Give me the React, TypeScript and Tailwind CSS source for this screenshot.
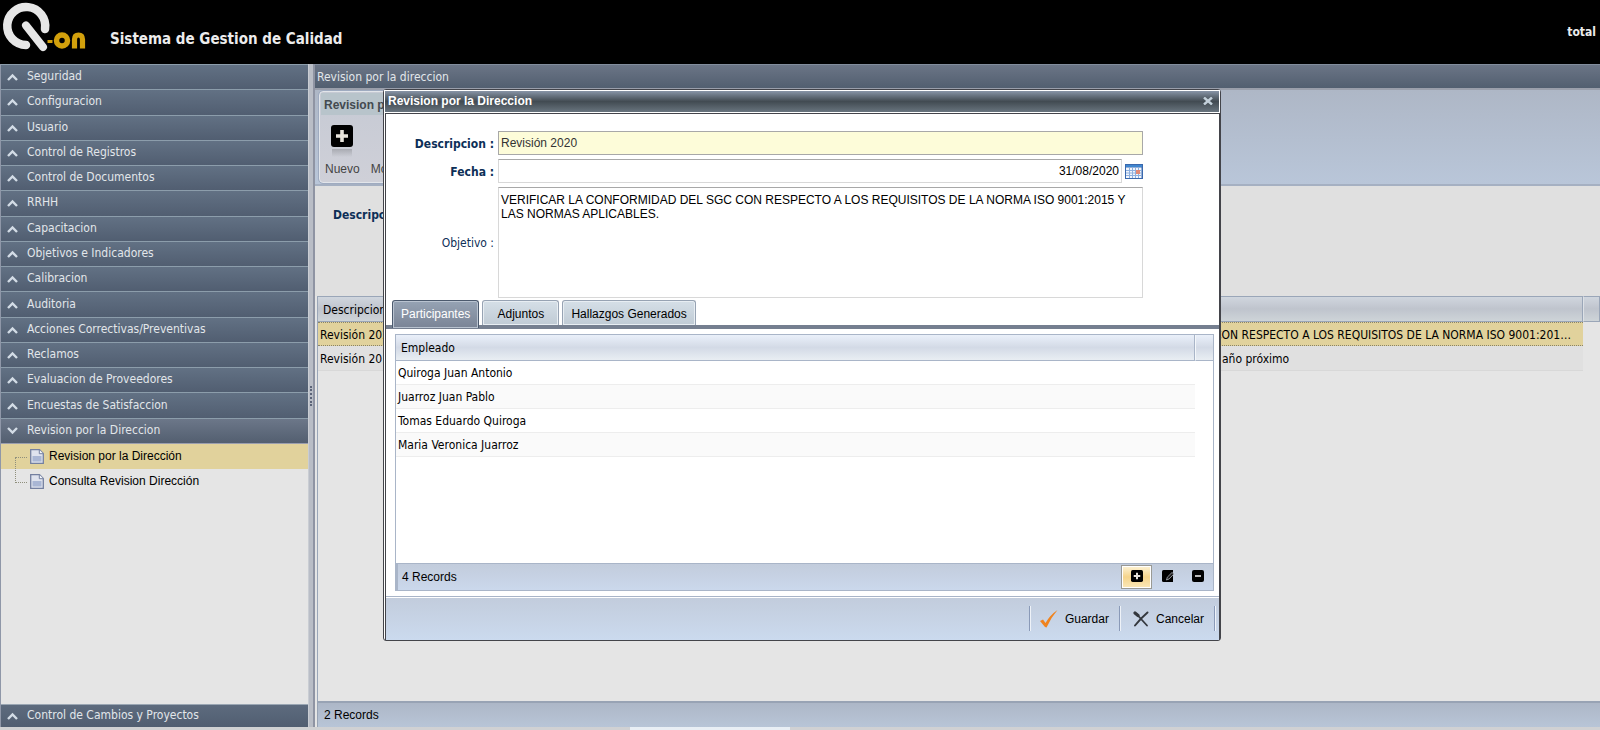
import React, { useState } from 'react';
import clsx from 'clsx';

const MENU = [
  'Seguridad',
  'Configuracion',
  'Usuario',
  'Control de Registros',
  'Control de Documentos',
  'RRHH',
  'Capacitacion',
  'Objetivos e Indicadores',
  'Calibracion',
  'Auditoria',
  'Acciones Correctivas/Preventivas',
  'Reclamos',
  'Evaluacion de Proveedores',
  'Encuestas de Satisfaccion',
  'Revision por la Direccion',
];

const EMPLEADOS = [
  'Quiroga Juan Antonio',
  'Juarroz Juan Pablo',
  'Tomas Eduardo Quiroga',
  'Maria Veronica Juarroz',
];

const REVISIONES = [
  {
    descripcion: 'Revisión 2020',
    objetivo:
      'VERIFICAR LA CONFORMIDAD DEL SGC CON RESPECTO A LOS REQUISITOS DE LA NORMA ISO 9001:2015 Y LAS NORMAS APLICABLES.',
  },
  {
    descripcion: 'Revisión 2019',
    objetivo: 'Planificar los objetivos de ventas para el año próximo',
  },
];

const TABS = ['Participantes', 'Adjuntos', 'Hallazgos Generados'];

const Logo = () => (
  <svg className="h-16 w-[90px]" viewBox="0 0 90 64" fill="none" aria-label="Q-on">
    <path d="M26 45 A19 19 0 1 1 45 29" stroke="#e6e6e6" strokeWidth="8.500" strokeLinecap="round" />
    <path d="M26 25.500 L43 47" stroke="#e6e6e6" strokeWidth="8" strokeLinecap="round" />
    <path d="M47.500 41.500h5" stroke="#d2a00c" strokeWidth="3" />
    <circle cx="62" cy="40.500" r="5.500" stroke="#d2a00c" strokeWidth="5.500" />
    <path d="M74.500 48.500v-9q0-4.500 4-4.500t4 4.500v9" stroke="#d2a00c" strokeWidth="5.200" />
  </svg>
);

const Chevron = ({ down }: { down?: boolean }) => (
  <svg
    className={clsx('h-2 w-[11px] shrink-0', down && 'rotate-180')}
    viewBox="0 0 11 8"
    fill="none"
    stroke="#d3dce6"
    strokeWidth="2.400"
  >
    <path d="M1 7 5.500 2.500 10 7" />
  </svg>
);

const FileIcon = () => (
  <svg className="h-[15px] w-[14px] shrink-0" viewBox="0 0 14 15">
    <path d="M.7.7H9.500L13.300 4.500V14.300H.7z" fill="#dfe3ee" stroke="#7480a0" strokeWidth="1.300" />
    <path d="M9.300.7V4.700H13.300" fill="#f6f8fc" stroke="#7480a0" />
    <path d="M2.500 7h9v5.500h-9z" fill="#a9b6d4" />
  </svg>
);

const PlusBox = ({ className }: { className: string }) => (
  <svg className={className} viewBox="0 0 22 22">
    <rect width="22" height="22" rx="3" fill="#000" />
    <path d="M11 5v12M5 11h12" stroke="#e8e4dc" strokeWidth="3.600" />
  </svg>
);

const MinusBox = () => (
  <svg className="size-3" viewBox="0 0 12 12">
    <rect width="12" height="12" rx="2" fill="#000" />
    <path d="M3 6h6" stroke="#e8e8e8" strokeWidth="1.600" />
  </svg>
);

const EditBox = () => (
  <svg className="size-3" viewBox="0 0 12 12">
    <path d="M0 1.500Q0 0 1.500 0H11V12H1.500Q0 12 0 10.500z" fill="#000" />
    <path d="M4.500 10l.8-2.800L10 2.500l1.800 1.600-4.600 4.800z" fill="#1c1c1c" stroke="#aeb4bd" strokeWidth=".8" />
  </svg>
);

const CalendarIcon = () => (
  <svg className="h-[15px] w-[18px]" viewBox="0 0 18 15">
    <rect width="18" height="15" fill="#3a68ad" />
    <rect x="1" y="1" width="16" height="2" fill="#3f86cf" />
    <rect x="1" y="3.500" width="15.500" height="10.500" fill="#f2f6fc" />
    <path d="M4.500 3.500V14M7.500 3.500V14M10.500 3.500V14M13.500 3.500V14M1 6.500H16.500M1 9H16.500M1 11.500H16.500" stroke="#8fb0df" />
    <rect x="11" y="6" width="4" height="4" fill="#e08a78" />
  </svg>
);

const CheckIcon = () => (
  <svg className="h-[19px] w-[18px]" viewBox="0 0 18 19">
    <path d="M0 12 3 10.500 5.500 14 Q10 6 17.500 1 Q11 8.500 6.500 18.500 L5 18z" fill="#f0831e" />
  </svg>
);

const CrossIcon = () => (
  <svg className="size-4" viewBox="0 0 16 16" fill="none" stroke="#34383e" strokeLinecap="round">
    <path d="M2 2 5 4.500" strokeWidth="3.200" />
    <path d="M3.500 3 14 14.500" strokeWidth="1.800" />
    <path d="M14.500 1.500Q8 7 2 14.500" strokeWidth="2" />
  </svg>
);

const Sidebar = () => (
  <aside className="flex w-[308px] shrink-0 flex-col border-l border-[#8f97a8] bg-[#e5e5e5]">
    <nav className="grid h-[379px] auto-rows-fr">
      {MENU.map((item, i) => {
        const open = i === MENU.length - 1;
        return (
          <button
            key={item}
            className={clsx(
              'flex items-center gap-[9px] border-t border-[#8c9dab] bg-linear-to-b pl-1.5 text-left text-[#e2e6ea]',
              open ? 'from-[#6c7789] to-[#535f70]' : 'from-[#627184] to-[#515e71]',
            )}
          >
            <Chevron down={open} />
            <span className="pb-0.5">{item}</span>
          </button>
        );
      })}
    </nav>
    <div className="relative grow border-t border-[#9a9eae] font-['Liberation_Sans',sans-serif] text-black">
      <a href="#revision" className="flex h-[25px] items-center gap-[5px] bg-[#e1d29c] pb-px pl-[29px]">
        <FileIcon />
        Revision por la Dirección
      </a>
      <a href="#consulta" className="flex h-[25px] items-center gap-[5px] pb-px pl-[29px]">
        <FileIcon />
        Consulta Revision Dirección
      </a>
      <div className="absolute top-[13px] left-[14px] h-[26px] w-3 border-y border-l border-dotted border-[#8f8f7c]" />
    </div>
    <button className="flex h-[23px] items-center gap-[9px] border-t border-[#9aa6b3] bg-linear-to-b from-[#5d6b7e] to-[#515e71] pl-1.5 text-left text-[#e2e6ea]">
      <Chevron />
      <span className="pb-0.5">Control de Cambios y Proyectos</span>
    </button>
  </aside>
);

const Splitter = () => (
  <div className="flex w-[7px] shrink-0 items-center border-r-2 border-l border-r-[#8f94a3] border-l-[#c9cdd3] bg-[#b9bdc6] pl-px">
    <div className="h-5 w-0.5 border-l-2 border-dotted border-[#5c6478]" />
  </div>
);

const headCell = 'border-y border-[#9aa6b8] bg-linear-to-b from-[#d0d6de] via-[#bfc4cd] to-[#ced4d8]';

const MainPanel = () => (
  <main className="flex min-w-0 grow flex-col bg-[#e5e5e5]">
    <h2 className="h-6 border-t border-[#828d9d] bg-linear-to-b from-[#6b7586] to-[#525f70] pl-0.5 leading-6 text-[#e2e6ea]">
      Revision por la direccion
    </h2>
    <div className="h-[98px] border-y-2 border-t-[#9a9fab] border-b-[#a5b0c2] bg-linear-to-b from-[#aeb7c6] to-[#b9c6d9] font-['Liberation_Sans',sans-serif]">
      <div className="mt-px ml-1 h-[92px] w-60 rounded-sm border border-[#e2e5ea] bg-linear-to-b from-[#c6cad4] to-[#cfd0d8] p-px outline outline-[#9fabc0]">
        <h3 className="h-[22px] bg-[#b8c4cb] pl-[3px] leading-6 font-bold text-[#434a50]">
          Revision por la Direccion
        </h3>
        <div className="flex gap-[11px] pt-2.5 pl-1 text-[#444]">
          <button className="flex flex-col items-center">
            <PlusBox className="size-[22px]" />
            <span className="mt-0.5 h-2 w-5 bg-linear-to-b from-[#a9abb2] to-transparent" />
            <span className="mt-1">Nuevo</span>
          </button>
          <button className="flex flex-col items-center">
            <PlusBox className="size-[22px]" />
            <span className="mt-0.5 h-2 w-5 bg-linear-to-b from-[#a9abb2] to-transparent" />
            <span className="mt-1">Modificar</span>
          </button>
        </div>
      </div>
    </div>
    <div className="h-[110px] bg-[#e0e0e0] pt-[21px] pl-[18px] font-bold text-[#0d2f57]">
      Descripcion :
    </div>
    <div className="ml-0.5 flex grow flex-col border-l border-[#9aa6b8]">
      <table className="w-full table-fixed border-separate border-spacing-0 text-left text-black">
        <colgroup>
          <col />
          <col className="w-[587px]" />
          <col className="w-[17px]" />
        </colgroup>
        <thead>
          <tr className="h-[26px]">
            <th className={clsx(headCell, 'pt-px pl-[5px] font-normal')}>Descripcion</th>
            <th className={clsx(headCell, 'border-r')} />
            <th className={clsx(headCell, 'border-r border-l border-l-[#dde1e6]')} />
          </tr>
        </thead>
        <tbody>
          {REVISIONES.map((r, i) => {
            const cell = i === 0
              ? 'h-6 border-y border-dotted border-[#8a8468] bg-[#e1d29c] pt-px'
              : 'h-[25px] border-b border-[#d8d8d8] bg-[#e0e0e0] pt-px';
            return (
              <tr key={r.descripcion}>
                <td className={clsx(cell, 'pl-0.5')}>{r.descripcion}</td>
                <td className={clsx(cell, 'truncate pr-1.5 pl-1')}>{r.objetivo}</td>
                <td />
              </tr>
            );
          })}
        </tbody>
      </table>
    </div>
    <div className="ml-0.5 h-[26px] border-t-2 border-l border-[#98a3b4] bg-linear-to-b from-[#adb7c7] to-[#b8c5d7] pl-1.5 font-['Liberation_Sans',sans-serif] leading-6 text-black">
      2 Records
    </div>
  </main>
);

const fieldBorder = 'border border-[#d8d8d8] border-t-[#a8a8a8]';
const fieldLabel = "pt-px text-right font-['DejaVu_Sans_Condensed',sans-serif] text-[#0d2f57]";

const ReviewDialog = () => {
  const [tab, setTab] = useState(0);
  const gridHead = 'h-[26px] border-b border-[#a9b5c8] bg-linear-to-b from-[#eaf0fa] via-[#d3dae6] to-[#e9eef3]';

  return (
    <div
      role="dialog"
      aria-labelledby="dialog-title"
      className="flex h-[552px] w-[838px] flex-col rounded-[3px] border border-[#43444a] bg-white font-['Liberation_Sans',sans-serif] text-black"
    >
      <div className="flex h-[23px] items-center justify-between border border-white bg-linear-to-b from-[#8895a7] via-[#424b52] to-[#69757f] pr-1.5 pb-px pl-[3px] font-bold text-white">
        <h2 id="dialog-title">Revision por la Direccion</h2>
        <button aria-label="Cerrar">
          <svg className="h-2 w-2.5" viewBox="0 0 10 8" stroke="#c3d0da" strokeWidth="2.400">
            <path d="M1 .5 9 7.500M9 .5 1 7.500" />
          </svg>
        </button>
      </div>

      <div className="ml-px flex grow flex-col border-t border-r border-l border-[#43444a] bg-white">
        <form className="grid grid-cols-[108px_645px] items-center gap-1 pt-[17px]">
          <label htmlFor="descripcion" className={clsx(fieldLabel, 'font-bold')}>
            Descripcion :
          </label>
          <input
            id="descripcion"
            defaultValue="Revisión 2020"
            className="h-6 border border-[#a8a8a8] bg-[#fdfcd9] px-0.5 text-[#333]"
          />
          <label htmlFor="fecha" className={clsx(fieldLabel, 'font-bold')}>
            Fecha :
          </label>
          <div className="flex items-center gap-[3px]">
            <input
              id="fecha"
              defaultValue="31/08/2020"
              className={clsx(fieldBorder, 'h-6 min-w-0 grow bg-white px-0.5 text-right')}
            />
            <button type="button" aria-label="Calendario">
              <CalendarIcon />
            </button>
          </div>
          <label htmlFor="objetivo" className={fieldLabel}>
            Objetivo :
          </label>
          <textarea
            id="objetivo"
            defaultValue="VERIFICAR LA CONFORMIDAD DEL SGC CON RESPECTO A LOS REQUISITOS DE LA NORMA ISO 9001:2015 Y LAS NORMAS APLICABLES."
            className={clsx(fieldBorder, 'h-[111px] resize-none bg-white px-0.5 py-[5px] leading-[14px]')}
          />
        </form>

        <div role="tablist" className="mt-0.5 flex h-[29px] gap-[3px] bg-linear-to-t from-[#757f90] from-[4px] to-white to-[4px] pl-1.5">
          {TABS.map((t, i) => (
            <button
              key={t}
              role="tab"
              aria-selected={tab === i}
              onClick={() => setTab(i)}
              className={clsx(
                'rounded-t-[3px] border border-b-0 bg-linear-to-b px-2 inset-ring',
                tab === i
                  ? 'h-7 border-[#4c5a6e] from-[#96a3b4] to-[#7a8496] pb-0.5 text-white inset-ring-[#b9c3d0]'
                  : 'h-[25px] border-[#97a3b3] from-[#d5dfe7] to-[#c0cbd5] pt-px text-black inset-ring-[#e8eef3]',
                i === 1 && 'w-[77px]',
              )}
            >
              {t}
            </button>
          ))}
        </div>

        <div className="mx-[5px] mt-[5px] ml-[9px] flex h-[257px] flex-col border border-[#a9b5c8]">
          <table className="w-full table-fixed border-separate border-spacing-0 text-left font-['DejaVu_Sans_Condensed',sans-serif]">
            <colgroup>
              <col />
              <col className="w-[18px]" />
            </colgroup>
            <thead>
              <tr>
                <th className={clsx(gridHead, 'border-r pl-[5px] font-normal')}>Empleado</th>
                <th className={clsx(gridHead, 'border-l border-l-[#f4f7fa]')} />
              </tr>
            </thead>
            <tbody>
              {EMPLEADOS.map((e) => (
                <tr key={e} className="h-6 even:bg-[#fafafa]">
                  <td className="border-b border-[#ededed] pt-px pl-0.5">{e}</td>
                </tr>
              ))}
            </tbody>
          </table>
          <div className="mt-auto flex h-[27px] items-center justify-between border-t border-l-2 border-[#a9b5c8] bg-linear-to-b from-[#c2ccdc] to-[#cbd8ec] pl-1">
            4 Records
            <div className="flex">
              <button aria-label="Agregar" className="flex h-6 w-[31px] items-center justify-center border border-[#9a9a94] bg-linear-to-b from-[#fdf3d6] via-[#f5d48b] to-[#fae8b8] pb-0.5 inset-ring inset-ring-white">
                <PlusBox className="size-3" />
              </button>
              <button aria-label="Modificar" className="flex h-6 w-[31px] items-center justify-center pb-0.5">
                <EditBox />
              </button>
              <button aria-label="Eliminar" className="flex h-6 w-[30px] items-center justify-center pb-0.5">
                <MinusBox />
              </button>
            </div>
          </div>
        </div>

        <div className="mt-auto flex h-11 items-center justify-end border-t border-[#a9b5c8] bg-linear-to-b from-[#c2ccdc] to-[#cbdaee] pr-1 shadow-[inset_0_1px_0_#fff]">
          <button className="flex h-[25px] items-center gap-[7px] border-l border-[#8a9ab8] px-2.5 shadow-[inset_1px_0_0_#eef2f8]">
            <CheckIcon />
            Guardar
          </button>
          <button className="flex h-[25px] items-center gap-[7px] border-x border-[#8a9ab8] pr-2.5 pl-[13px] shadow-[inset_1px_0_0_#eef2f8,1px_0_0_#eef2f8]">
            <CrossIcon />
            Cancelar
          </button>
        </div>
      </div>
    </div>
  );
};

export default function App() {
  return (
    <div className="relative flex h-screen flex-col overflow-hidden bg-[#e5e5e5] font-['DejaVu_Sans_Condensed',sans-serif] text-xs">
      <header className="flex h-16 shrink-0 items-center justify-between bg-black pr-1 font-bold text-[#ececec]">
        <div className="flex items-center gap-5">
          <Logo />
          <h1 className="pt-4 text-[15px]">Sistema de Gestion de Calidad</h1>
        </div>
        <span>total</span>
      </header>

      <div className="flex min-h-0 grow">
        <Sidebar />
        <Splitter />
        <MainPanel />
      </div>

      <div className="flex h-[3px] shrink-0 bg-[#d0d1d3] pl-[630px]">
        <div className="w-40 bg-[#e9eff5]" />
      </div>

      <div className="absolute inset-x-0 top-[89px] flex justify-center pl-1">
        <ReviewDialog />
      </div>
    </div>
  );
}
